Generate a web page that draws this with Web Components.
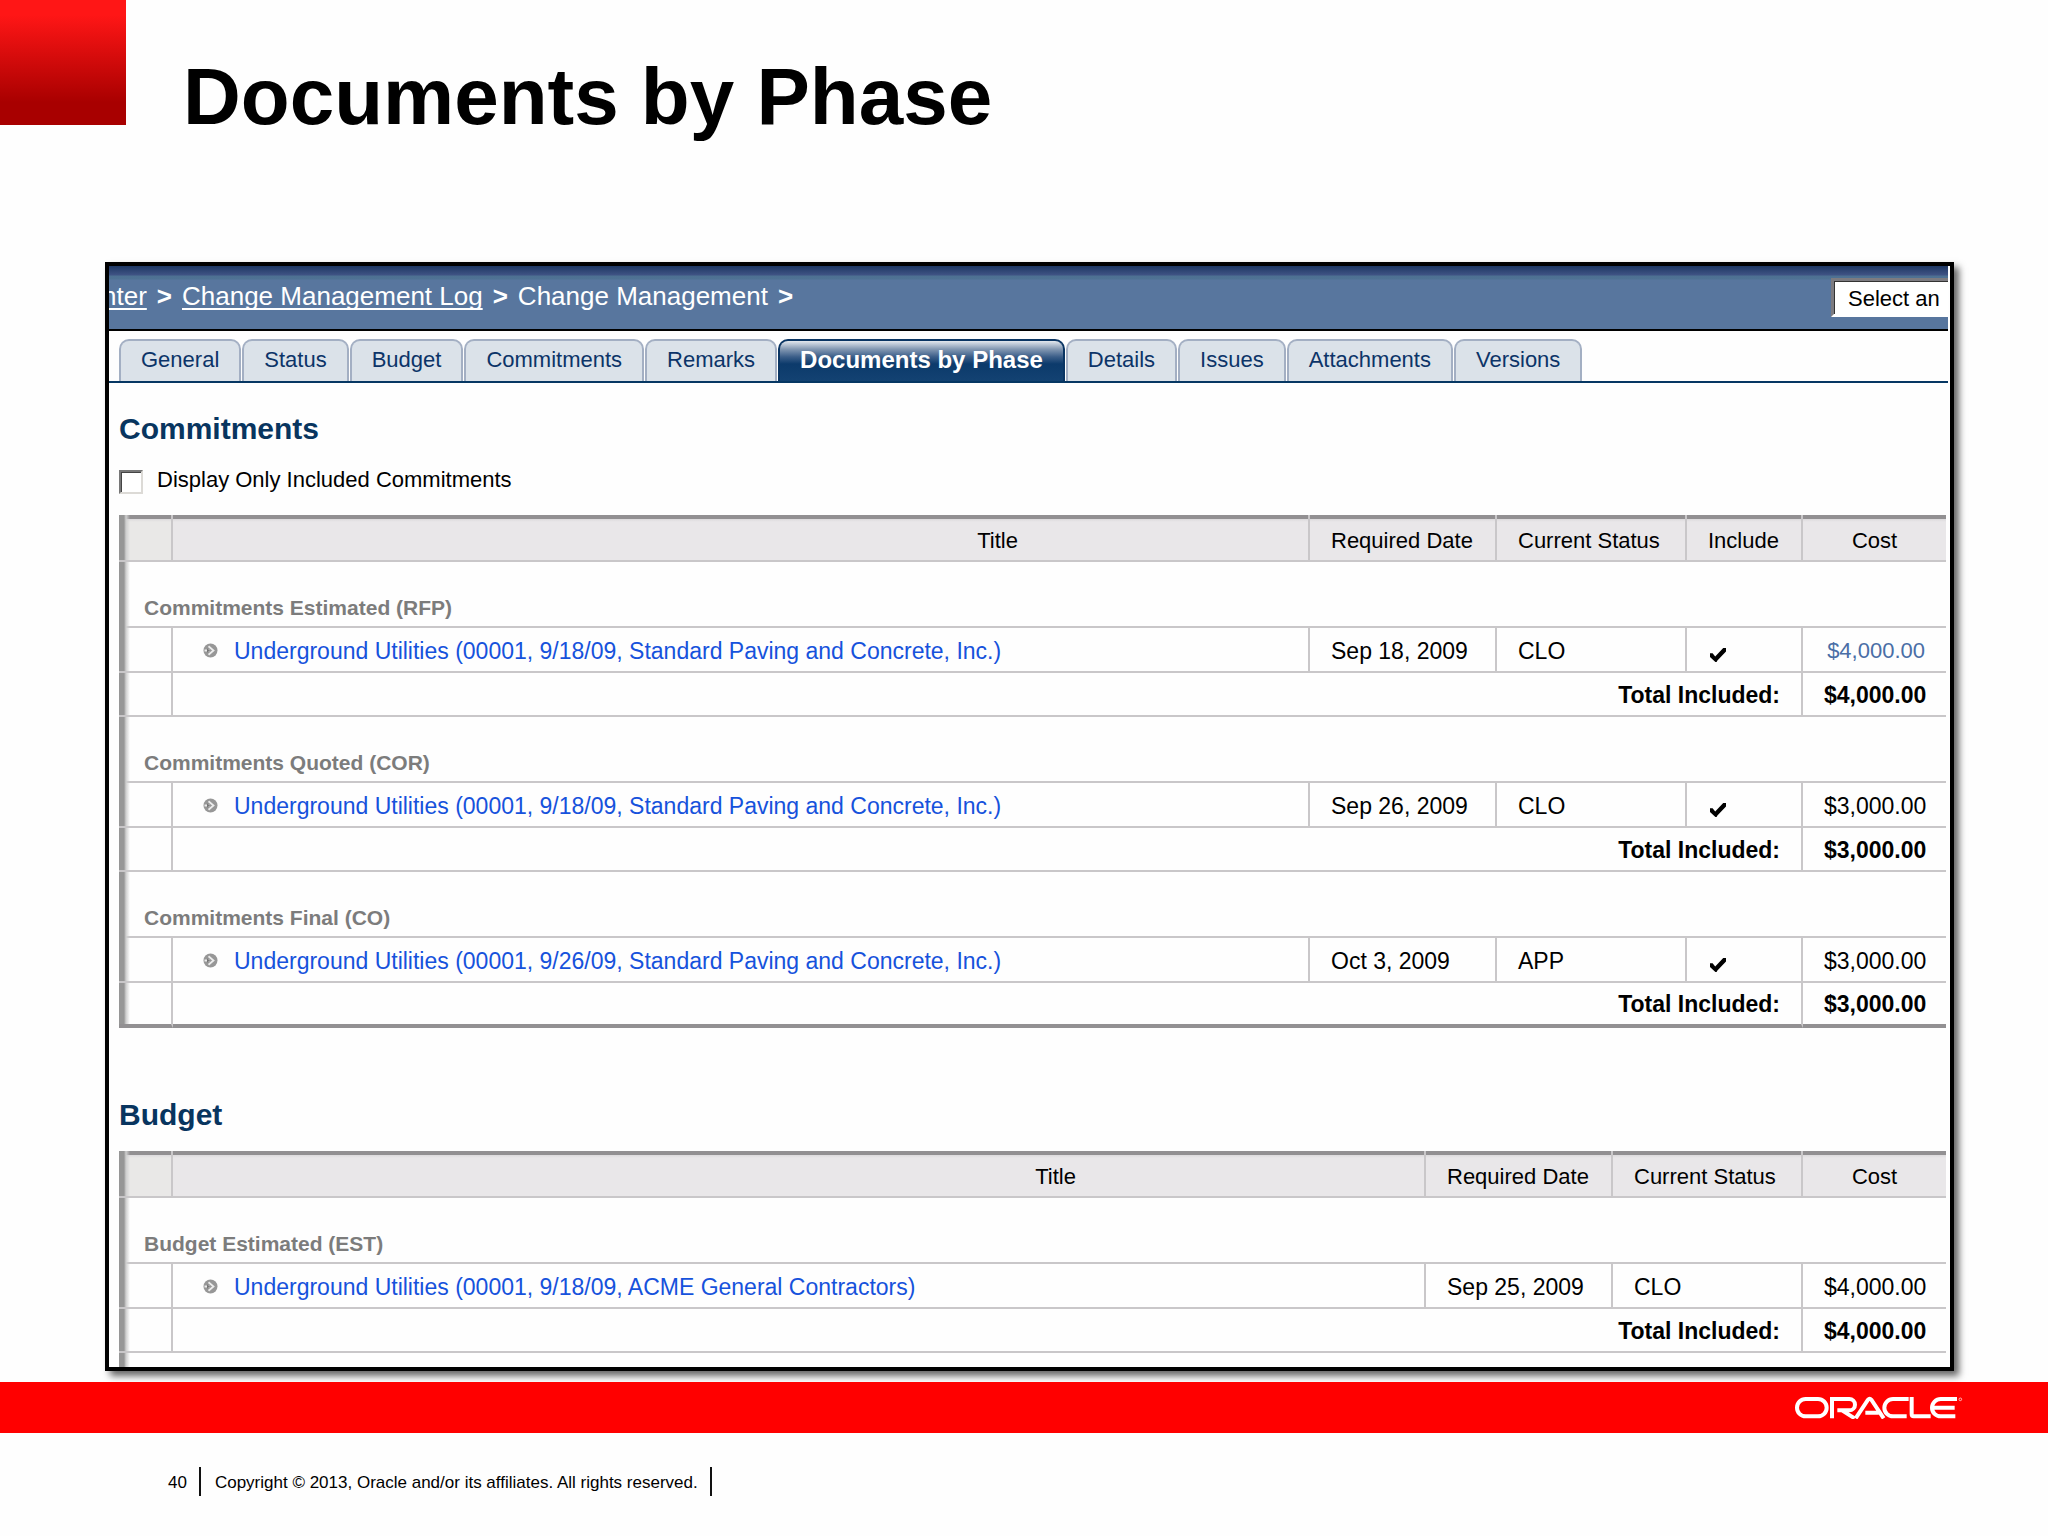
<!DOCTYPE html>
<html lang="en">
<head>
<meta charset="utf-8">
<title>Documents by Phase</title>
<style>
  body { margin: 0; background: #fefefe; font-family: "Liberation Sans", Arial, sans-serif; color: #000; }
</style>
</head>
<body>
<deck-slide>
  <slide-header slot="header">Documents by Phase</slide-header>
  <app-window>
    <crumb-bar></crumb-bar>
    <tab-strip>
      <tab-item>General</tab-item>
      <tab-item>Status</tab-item>
      <tab-item>Budget</tab-item>
      <tab-item>Commitments</tab-item>
      <tab-item>Remarks</tab-item>
      <tab-item selected>Documents by Phase</tab-item>
      <tab-item>Details</tab-item>
      <tab-item>Issues</tab-item>
      <tab-item>Attachments</tab-item>
      <tab-item>Versions</tab-item>
    </tab-strip>
    <phase-section heading="Commitments">
      <check-option slot="option">Display Only Included Commitments</check-option>
      <docs-table name="commitments"></docs-table>
    </phase-section>
    <phase-section heading="Budget" spaced>
      <docs-table name="budget"></docs-table>
    </phase-section>
  </app-window>
  <slide-footer slot="footer" page="40">Copyright © 2013, Oracle and/or its affiliates. All rights reserved.</slide-footer>
</deck-slide>

<script>
const define = (name, html, setup) => {
  const template = document.createElement('template');
  template.innerHTML = html;
  customElements.define(name, class extends HTMLElement {
    constructor() {
      super();
      this.attachShadow({ mode: 'open' }).append(template.content.cloneNode(true));
    }
    connectedCallback() { if (setup) setup(this, this.shadowRoot); }
  });
};

define('deck-slide', `
  <style>
    :host { display: flex; flex-direction: column; min-height: 100vh; }
    main { display: block; padding: 0 94px 11px 105px; }
  </style>
  <slot name="header"></slot>
  <main><slot></slot></main>
  <slot name="footer"></slot>`);

define('slide-header', `
  <style>
    :host { display: flex; align-items: flex-start; height: 262px; }
    .mark { width: 126px; height: 125px; background: linear-gradient(#ff1616 12%, #a80000 82%); }
    h1 { margin: 49px 0 0 57px; font-size: 80px; line-height: 96px; font-weight: 700; }
  </style>
  <div class="mark"></div>
  <h1><slot></slot></h1>`);

define('app-window', `
  <style>
    :host { display: block; border: 4px solid #000; background: #fefefe; box-shadow: 5px 5px 7px rgba(0,0,0,.6); padding-right: 2px; }
    .view { overflow: hidden; }
  </style>
  <div class="view"><slot></slot></div>`);

define('crumb-bar', `
  <style>
    :host { display: flex; align-items: center; justify-content: space-between; height: 63px; border-bottom: 2px solid #000;
      background: linear-gradient(#1d3763 0, #3f5384 9px, #4d7092 10px, #4f7294 13px, #58769e 14px); color: #fff; }
    nav { display: flex; gap: 10px; margin-left: -7px; padding-bottom: 4px; font-size: 26px; line-height: 32px; white-space: nowrap; }
    a { color: inherit; text-decoration: underline; text-decoration-thickness: 2px; text-underline-offset: 3px; text-decoration-skip-ink: none; }
    b { font-weight: 700; }
    select { appearance: none; box-sizing: border-box; width: 152px; height: 39px; margin: 0 -35px 0 0; padding: 2px 0 0 14px; flex: none;
      border: 3px solid; border-color: #7c7b80 #fff #fff #7c7b80; border-radius: 0; background: #fff;
      box-shadow: inset 1px 1px #333; font: 22px/30px "Liberation Sans", Arial, sans-serif; color: #000; }
  </style>
  <nav aria-label="Breadcrumb">
    <a href="#center">nter</a><b>&gt;</b><a href="#log">Change Management Log</a><b>&gt;</b><span>Change Management</span><b>&gt;</b>
  </nav>
  <select aria-label="Action"><option>Select an</option></select>`);

define('tab-strip', `
  <style>
    :host { display: flex; gap: 1px; padding: 8px 0 0 10px; border-bottom: 2px solid #063763; }
  </style>
  <slot></slot>`);

define('tab-item', `
  <style>
    :host { display: block; }
    button { display: block; box-sizing: border-box; height: 42px; margin: 0; padding: 0 20px 3px;
      border: 2px solid #a3afc3; border-bottom: 0; border-radius: 10px 10px 0 0;
      background: #dbe2e9; color: #0c3468; font: 22px/36px "Liberation Sans", Arial, sans-serif; white-space: nowrap; }
    :host([selected]) button { border-color: #0a3563; color: #fff; font-size: 24px; font-weight: 700;
      background: linear-gradient(#e3e8ee 0, #8499b3 8px, #3a5d88 16px, #0c3a6b 23px, #134272 100%); }
  </style>
  <button type="button" role="tab"><slot></slot></button>`,
  (host, root) => root.querySelector('button').setAttribute('aria-selected', host.hasAttribute('selected')));

define('phase-section', `
  <style>
    :host { display: block; padding: 28px 2px 0 10px; }
    :host([spaced]) { padding-top: 69px; }
    h2 { margin: 0; color: #08355f; font-size: 30px; line-height: 36px; font-weight: 700; }
    .table { margin-top: 21px; }
    :host([spaced]) .table { margin-top: 18px; }
  </style>
  <h2></h2>
  <slot name="option"></slot>
  <div class="table"><slot></slot></div>`,
  (host, root) => { root.querySelector('h2').textContent = host.getAttribute('heading'); });

define('check-option', `
  <style>
    :host { display: block; padding-top: 23px; }
    div { display: flex; align-items: flex-start; gap: 14px; height: 24px; }
    input { appearance: none; box-sizing: border-box; width: 24px; height: 24px; margin: 0; background: #fff;
      border: 2px solid; border-color: #777 #dcdad6 #dcdad6 #777; box-shadow: inset 1px 1px #444; }
    label { font-size: 22px; line-height: 20px; }
  </style>
  <div><input type="checkbox" id="opt"><label for="opt"><slot></slot></label></div>`);

define('bullet-icon', `
  <style>:host { display: block; flex: none; } svg { display: block; }</style>
  <svg width="15" height="15" viewBox="0 0 15 15" aria-hidden="true">
    <circle cx="7.5" cy="7.5" r="7" fill="#979797"/>
    <path d="M1.5 7.5h5M5.5 3.2l5 4.3-5 4.3" fill="none" stroke="#ececec" stroke-width="1.8"/>
    <path d="M4 5.5l3 2-3 2z" fill="#777"/>
  </svg>`);

define('check-icon', `
  <style>:host { display: block; padding: 9px 0 0 2px; } svg { display: block; }</style>
  <svg width="16" height="14" viewBox="0 0 16 14" role="img" aria-label="Included">
    <path d="M0 5.2l2.6 0 2.6 3.2L13.2 0H16v3.6L7.4 12.6 6.6 14H5.4L0 9z" fill="#000"/>
  </svg>`);

const tables = {
  commitments: {
    columns: [['Required Date', 'date'], ['Current Status', 'status'], ['Include', 'include']],
    groups: [
      ['Commitments Estimated (RFP)', 'Underground Utilities (00001, 9/18/09, Standard Paving and Concrete, Inc.)', 'Sep 18, 2009', 'CLO', '$4,000.00', true],
      ['Commitments Quoted (COR)', 'Underground Utilities (00001, 9/18/09, Standard Paving and Concrete, Inc.)', 'Sep 26, 2009', 'CLO', '$3,000.00'],
      ['Commitments Final (CO)', 'Underground Utilities (00001, 9/26/09, Standard Paving and Concrete, Inc.)', 'Oct 3, 2009', 'APP', '$3,000.00']
    ]
  },
  budget: {
    columns: [['Required Date', 'date'], ['Current Status', 'status']],
    groups: [
      ['Budget Estimated (EST)', 'Underground Utilities (00001, 9/18/09, ACME General Contractors)', 'Sep 25, 2009', 'CLO', '$4,000.00']
    ],
    continues: true
  }
};

define('docs-table', `
  <style>
    :host { display: block; --line: #c9c7c9; --edge: #929092;
      --strip: linear-gradient(90deg, #969696 0, #969696 5px, #b4b4b4 6px, #cfcfcf 7px, rgba(225,225,225,0) 11px); }
    table { width: 100%; table-layout: fixed; border-collapse: separate; border-spacing: 0; font-size: 23px; line-height: 28px; }
    .mark { width: 54px; } .date { width: 187px; } .status { width: 190px; } .include { width: 116px; } .cost { width: 143px; }
    th, td { box-sizing: border-box; padding: 2px 21px 0; text-align: left; white-space: nowrap; vertical-align: middle;
      border: 0 solid var(--line); border-width: 0 2px 2px 0; }
    tr > :last-child { border-right: 0; }
    th { height: 47px; padding-top: 6px; font-size: 22px; font-weight: 400;
      background: linear-gradient(var(--edge) 4px, #dcdadc 4px, #e9e7e9 7px); }
    th.title { text-align: center; padding-left: 514px; padding-right: 0; }
    th.price { text-align: center; }
    tr > .first { background: var(--strip) 0 0 / 12px 100% no-repeat; padding: 0; }
    th.first { background: var(--strip) 0 0 / 12px 100% no-repeat, linear-gradient(var(--edge) 4px, #dcdadc 4px, #e9e8e7 7px); }
    .group td { height: 66px; padding: 0 0 8px 25px; vertical-align: bottom; border: 0; color: #7c7c7c;
      font-size: 21px; line-height: 24px; font-weight: 700;
      background: var(--strip) 0 0 / 12px 100% no-repeat, linear-gradient(var(--line), var(--line)) 0 100% / 100% 2px no-repeat; }
    .item td { height: 45px; }
    .total td { height: 44px; font-weight: 700; text-align: right; }
    .price { text-align: right; }
    .doc { display: flex; align-items: center; gap: 16px; padding-left: 9px; }
    a { color: #1652dc; text-decoration: none; }
    .price a { color: #4a6ea6; font-size: 22px; }
    .closed .total:last-child td { height: 45px; padding-top: 0; border-bottom: 4px solid var(--edge); }
    .rest td { height: 14px; border: 0; }
  </style>
  <table></table>`,
  (host, root) => {
    const { columns, groups, continues } = tables[host.getAttribute('name')];
    const include = columns.length === 3;
    const span = columns.length + 1;
    root.querySelector('table').innerHTML = `
      <colgroup><col class="mark"><col>${columns.map(c => `<col class="${c[1]}">`).join('')}<col class="cost"></colgroup>
      <thead><tr><th class="first"></th><th class="title">Title</th>${columns.map(c => `<th>${c[0]}</th>`).join('')}<th class="price">Cost</th></tr></thead>
      <tbody class="${continues ? '' : 'closed'}">${groups.map(([label, title, date, status, cost, linked]) => `
        <tr class="group"><td colspan="${span + 2}">${label}</td></tr>
        <tr class="item"><td class="first"></td><td><div class="doc"><bullet-icon></bullet-icon><a href="#doc">${title}</a></div></td>
          <td>${date}</td><td>${status}</td>${include ? '<td><check-icon></check-icon></td>' : ''}
          <td class="price">${linked ? `<a href="#cost">${cost}</a>` : cost}</td></tr>
        <tr class="total"><td class="first"></td><td colspan="${span}">Total Included:</td><td>${cost}</td></tr>`).join('')}
        ${continues ? `<tr class="rest"><td class="first" colspan="${span + 2}"></td></tr>` : ''}
      </tbody>`;
  });

define('oracle-logo', `
  <style>:host { display: block; } svg { display: block; }</style>
  <svg width="168" height="23" viewBox="45 49 504 69" role="img" aria-label="Oracle" fill="none" stroke="#fff" stroke-width="12">
    <rect x="51" y="58" width="89" height="52" rx="26"/>
    <path d="M156 116V58h52a17 17 0 0 1 0 34h-36M186 92l38 24"/>
    <path d="M227 116l37-56q5-6 10 0l37 56M256 99h40"/>
    <path d="M386 58h-47a26 26 0 0 0 0 52h41"/>
    <path d="M395 52v52q0 6 6 6h51"/>
    <path d="M531 58h-49a26 26 0 0 0 0 52h44M458 84h66"/>
    <circle cx="541" cy="59" r="4" stroke-width="2"/>
  </svg>`);

define('slide-footer', `
  <style>
    :host { display: block; position: relative; }
    .bar { display: flex; align-items: center; justify-content: flex-end; height: 51px; padding-right: 85px; background: #f00; }
    footer { display: flex; align-items: center; height: 29px; padding: 34px 168px; font-size: 17px; line-height: 20px; white-space: nowrap; }
    span { padding-top: 2px; }
    i { width: 2px; height: 29px; margin: 0 14px 0 12px; background: #111; }
  </style>
  <div class="bar"><oracle-logo></oracle-logo></div>
  <footer><span class="page"></span><i></i><span><slot></slot></span><i></i></footer>`,
  (host, root) => { root.querySelector('.page').textContent = host.getAttribute('page'); });
</script>
</body>
</html>
